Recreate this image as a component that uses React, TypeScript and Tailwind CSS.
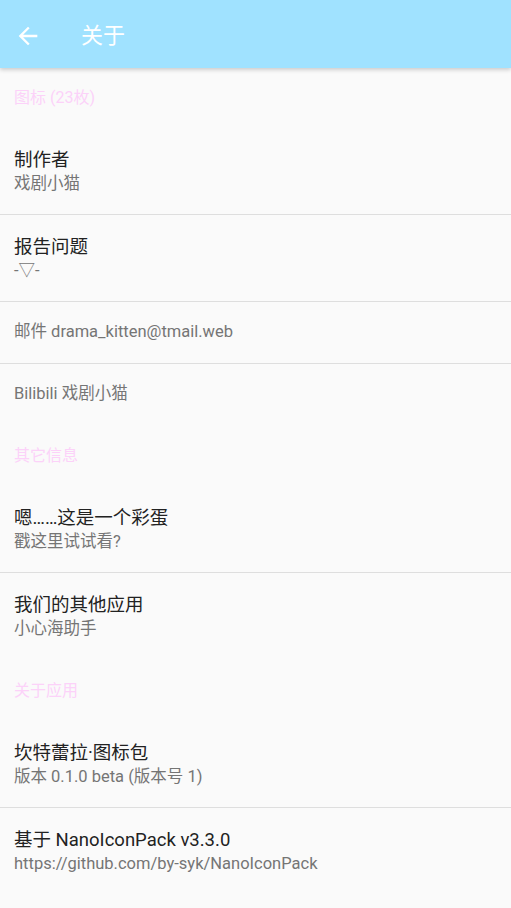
import React from 'react';

type Item = { title?: string; summary?: string };
type Group = { name: string; head: string; items: Item[] };

const groups: Group[] = [
  {
    name: '图标 (23枚)',
    head: 'h-[60px]',
    items: [
      { title: '制作者', summary: '戏剧小猫' },
      { title: '报告问题', summary: '-▽-' },
      { summary: '邮件 drama_kitten@tmail.web' },
      { summary: 'Bilibili 戏剧小猫' },
    ],
  },
  {
    name: '其它信息',
    head: 'h-[61px] pt-[1px]',
    items: [
      { title: '嗯……这是一个彩蛋', summary: '戳这里试试看?' },
      { title: '我们的其他应用', summary: '小心海助手' },
    ],
  },
  {
    name: '关于应用',
    head: 'h-[62px] pt-[1px]',
    items: [
      { title: '坎特蕾拉·图标包', summary: '版本 0.1.0 beta (版本号 1)' },
      { title: '基于 NanoIconPack v3.3.0', summary: 'https://github.com/by-syk/NanoIconPack' },
    ],
  },
];

const PrefRow = ({ item, divider }: { item: Item; divider: boolean }) => {
  const hasTitle = !!item.title;
  return (
    <div className={`px-[14px] ${divider ? 'border-b border-[#dedede]' : ''}`}>
      {hasTitle ? (
        <div className="h-[86px] flex flex-col pt-[19px]">
          <div className="text-[18.5px] leading-[26px] text-[#222222]">{item.title}</div>
          <div className="text-[16.5px] leading-[22px] text-[#757575]">{item.summary}</div>
        </div>
      ) : (
        <div className="h-[61px] flex items-center text-[16.5px] text-[#757575]">{item.summary}</div>
      )}
    </div>
  );
};

export default function App() {
  return (
    <div
      className="w-[511px] h-[908px] bg-[#fafafa] overflow-hidden"
      style={{ fontFamily: "Roboto, 'Noto Sans CJK SC', sans-serif" }}
    >
      {/* App bar */}
      <div className="h-[68px] bg-[#a0e2ff] flex items-center shadow-[0_2px_4px_rgba(0,0,0,0.18)] relative z-10">
        <svg className="ml-[14px] mt-[3px] w-[28px] h-[28px]" viewBox="0 0 24 24" fill="#ffffff">
          <path d="M20 11H7.83l5.59-5.59L12 4l-8 8 8 8 1.41-1.41L7.83 13H20v-2z" />
        </svg>
        <div className="ml-[39px] mt-[3px] text-[22px] text-white">关于</div>
      </div>

      {groups.map((g) => (
        <div key={g.name}>
          <div className={`${g.head} px-[14px] flex items-center text-[16px] text-[#fcd2f9]`}>{g.name}</div>
          {g.items.map((it, i) => (
            <PrefRow key={i} item={it} divider={i < g.items.length - 1} />
          ))}
        </div>
      ))}
    </div>
  );
}
